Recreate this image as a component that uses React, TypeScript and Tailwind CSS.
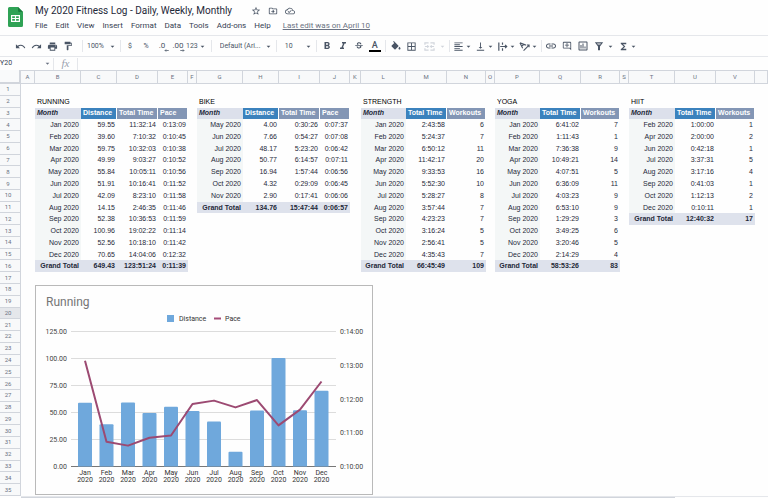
import React from 'react';
import {
  MdUndo,
  MdRedo,
  MdPrint,
  MdFormatPaint,
  MdFormatBold,
  MdFormatItalic,
  MdStrikethroughS,
  MdBorderAll,
  MdFormatAlignLeft,
  MdVerticalAlignBottom,
  MdInsertLink,
  MdOutlineAddComment,
  MdOutlineInsertChart,
  MdFunctions,
  MdStarBorder,
  MdOutlineDriveFileMove,
  MdOutlineCloudDone,
  MdArrowDropDown,
} from 'react-icons/md';

const menus = ['File', 'Edit', 'View', 'Insert', 'Format', 'Data', 'Tools', 'Add-ons', 'Help'];

const columns = [
  { name: 'A', width: 'w-[14px]' },
  { name: 'B', width: 'w-[46px]' },
  { name: 'C', width: 'w-[36px]' },
  { name: 'D', width: 'w-[41px]' },
  { name: 'E', width: 'w-[30px]' },
  { name: 'F', width: 'w-[9px]' },
  { name: 'G', width: 'w-[46px]' },
  { name: 'H', width: 'w-[36px]' },
  { name: 'I', width: 'w-[41px]' },
  { name: 'J', width: 'w-[30px]' },
  { name: 'K', width: 'w-[11px]' },
  { name: 'L', width: 'w-[45px]' },
  { name: 'M', width: 'w-[41px]' },
  { name: 'N', width: 'w-[39px]' },
  { name: 'O', width: 'w-[9px]' },
  { name: 'P', width: 'w-[45px]' },
  { name: 'Q', width: 'w-[41px]' },
  { name: 'R', width: 'w-[39px]' },
  { name: 'S', width: 'w-[9px]' },
  { name: 'T', width: 'w-[46px]' },
  { name: 'U', width: 'w-[41px]' },
  { name: 'V', width: 'w-[39px]' },
  { name: '', width: '' },
];

interface Block {
  title: string;
  start: number;
  headers: string[];
  rows: string[][];
}

// start = index of the block's first column; the last row is the total
const blocks: Block[] = [
  {
    title: 'RUNNING',
    start: 1,
    headers: ['Month', 'Distance', 'Total Time', 'Pace'],
    rows: [
      ['Jan 2020', '59.55', '11:32:14', '0:13:09'],
      ['Feb 2020', '39.60', '7:10:32', '0:10:45'],
      ['Mar 2020', '59.75', '10:32:03', '0:10:38'],
      ['Apr 2020', '49.99', '9:03:27', '0:10:52'],
      ['May 2020', '55.84', '10:05:11', '0:10:56'],
      ['Jun 2020', '51.91', '10:16:41', '0:11:52'],
      ['Jul 2020', '42.09', '8:23:10', '0:11:58'],
      ['Aug 2020', '14.15', '2:46:35', '0:11:46'],
      ['Sep 2020', '52.38', '10:36:53', '0:11:59'],
      ['Oct 2020', '100.96', '19:02:22', '0:11:14'],
      ['Nov 2020', '52.56', '10:18:10', '0:11:42'],
      ['Dec 2020', '70.65', '14:04:06', '0:12:32'],
      ['Grand Total', '649.43', '123:51:24', '0:11:39'],
    ],
  },
  {
    title: 'BIKE',
    start: 6,
    headers: ['Month', 'Distance', 'Total Time', 'Pace'],
    rows: [
      ['May 2020', '4.00', '0:30:26', '0:07:37'],
      ['Jun 2020', '7.66', '0:54:27', '0:07:08'],
      ['Jul 2020', '48.17', '5:23:20', '0:06:42'],
      ['Aug 2020', '50.77', '6:14:57', '0:07:11'],
      ['Sep 2020', '16.94', '1:57:44', '0:06:56'],
      ['Oct 2020', '4.32', '0:29:09', '0:06:45'],
      ['Nov 2020', '2.90', '0:17:41', '0:06:06'],
      ['Grand Total', '134.76', '15:47:44', '0:06:57'],
    ],
  },
  {
    title: 'STRENGTH',
    start: 11,
    headers: ['Month', 'Total Time', 'Workouts'],
    rows: [
      ['Jan 2020', '2:43:58', '6'],
      ['Feb 2020', '5:24:37', '7'],
      ['Mar 2020', '6:50:12', '11'],
      ['Apr 2020', '11:42:17', '20'],
      ['May 2020', '9:33:53', '16'],
      ['Jun 2020', '5:52:30', '10'],
      ['Jul 2020', '5:28:27', '8'],
      ['Aug 2020', '3:57:44', '7'],
      ['Sep 2020', '4:23:23', '7'],
      ['Oct 2020', '3:16:24', '5'],
      ['Nov 2020', '2:56:41', '5'],
      ['Dec 2020', '4:35:43', '7'],
      ['Grand Total', '66:45:49', '109'],
    ],
  },
  {
    title: 'YOGA',
    start: 15,
    headers: ['Month', 'Total Time', 'Workouts'],
    rows: [
      ['Jan 2020', '6:41:02', '7'],
      ['Feb 2020', '1:11:43', '1'],
      ['Mar 2020', '7:36:38', '9'],
      ['Apr 2020', '10:49:21', '14'],
      ['May 2020', '4:07:51', '5'],
      ['Jun 2020', '6:36:09', '11'],
      ['Jul 2020', '4:03:23', '9'],
      ['Aug 2020', '6:53:10', '9'],
      ['Sep 2020', '1:29:29', '3'],
      ['Oct 2020', '3:49:25', '6'],
      ['Nov 2020', '3:20:46', '5'],
      ['Dec 2020', '2:14:29', '4'],
      ['Grand Total', '58:53:26', '83'],
    ],
  },
  {
    title: 'HIIT',
    start: 19,
    headers: ['Month', 'Total Time', 'Workouts'],
    rows: [
      ['Feb 2020', '1:00:00', '1'],
      ['Apr 2020', '2:00:00', '2'],
      ['Jun 2020', '0:42:18', '1'],
      ['Jul 2020', '3:37:31', '5'],
      ['Aug 2020', '3:17:16', '4'],
      ['Sep 2020', '0:41:03', '1'],
      ['Oct 2020', '1:12:13', '2'],
      ['Dec 2020', '0:10:11', '1'],
      ['Grand Total', '12:40:32', '17'],
    ],
  },
];

const rowNumbers = Array.from({ length: 35 }, (_, i) => i + 1);
const SELECTED_ROW = 20;

const getCell = (row: number, col: number): { text: string; style: string } => {
  const block = blocks.find((b) => col >= b.start && col < b.start + b.headers.length);
  if (!block) return { text: '', style: '' };
  const i = col - block.start;

  if (row === 2 && i === 0) return { text: block.title, style: 'text-left text-black' };
  if (row === 3) {
    if (i === 0) return { text: block.headers[0], style: 'text-left font-bold italic bg-[#dce0eb]' };
    const bg = i === 1 ? 'bg-[#3b82bd]' : 'bg-[#8396b5]';
    return { text: block.headers[i], style: `text-left font-bold text-white border-r border-white ${bg}` };
  }

  const data = block.rows[row - 4];
  if (!data) return { text: '', style: '' };
  if (row - 4 === block.rows.length - 1) {
    return { text: data[i], style: 'text-right font-bold bg-[#dee2ec]' };
  }
  return { text: data[i], style: i === 0 ? 'text-right bg-[#f4f7f7]' : 'text-right' };
};

const Caret: React.FC = () => <MdArrowDropDown className="size-[9px] shrink-0" />;

const Separator: React.FC = () => <span className="h-3 w-px shrink-0 bg-gray-200" />;

const Tool: React.FC<{ label: string; children: React.ReactNode }> = ({ label, children }) => (
  <button aria-label={label} className="flex h-4 w-4 shrink-0 items-center justify-center">
    {children}
  </button>
);

const DropTool: React.FC<{ label: string; children: React.ReactNode }> = ({ label, children }) => (
  <button aria-label={label} className="flex h-4 w-[22px] shrink-0 items-center pl-[3px]">
    {children}
    <Caret />
  </button>
);

const Picker: React.FC<{ label: string; value: string; width: string }> = ({ label, value, width }) => (
  <label className={`relative flex h-4 shrink-0 items-center ${width}`}>
    <select aria-label={label} className="w-full appearance-none bg-transparent text-[7px] leading-4 outline-none">
      <option>{value}</option>
    </select>
    <span className="pointer-events-none absolute right-[3px]">
      <Caret />
    </span>
  </label>
);

const SheetsLogo: React.FC = () => (
  <svg viewBox="0 0 15 20" className="h-5 w-[15px] shrink-0">
    <path d="M1.5 0H10l5 5v13.5a1.5 1.5 0 0 1-1.5 1.5h-12A1.5 1.5 0 0 1 0 18.500v-17A1.5 1.5 0 0 1 1.500 0z" fill="#2fa255" />
    <path d="M10 0l5 5h-3.700A1.300 1.300 0 0 1 10 3.700z" fill="#1b7d3e" />
    <path d="M3 8h9v7H3zM4.200 9.200v1.700h2.700V9.200zm3.900 0v1.700h2.700V9.200zM4.200 12.100v1.700h2.700v-1.700zm3.900 0v1.700h2.700v-1.700z" fill="#fff" fillRule="evenodd" />
  </svg>
);

const Header: React.FC = () => (
  <header className="flex items-start gap-3 px-2 pt-[7px] h-[35px]">
    <SheetsLogo />
    <div className="-mt-[3px]">
      <div className="flex items-center">
        <h1 className="text-[10px] leading-[14px] whitespace-nowrap text-gray-800">
          My 2020 Fitness Log - Daily, Weekly, Monthly
        </h1>
        <div className="ml-[19px] flex gap-[7px] text-gray-600">
          <button aria-label="Star"><MdStarBorder className="size-[10px]" /></button>
          <button aria-label="Move"><MdOutlineDriveFileMove className="size-[10px]" /></button>
          <button aria-label="See document status"><MdOutlineCloudDone className="size-[10px]" /></button>
        </div>
      </div>
      <nav className="flex gap-[8px] pt-[2px] text-[8px] leading-3 whitespace-nowrap text-gray-700">
        {menus.map((menu) => (
          <button key={menu}>{menu}</button>
        ))}
        <a href="#history" className="ml-1 text-gray-500 underline">
          Last edit was on April 10
        </a>
      </nav>
    </div>
  </header>
);

const Toolbar: React.FC = () => (
  <div className="flex h-[22px] items-center overflow-hidden border-y border-gray-200 pl-3 text-[7px] text-gray-600">
    <div className="flex pr-[6px]">
      <Tool label="Undo"><MdUndo className="size-[11px]" /></Tool>
      <Tool label="Redo"><MdRedo className="size-[11px]" /></Tool>
      <Tool label="Print"><MdPrint className="size-[11px]" /></Tool>
      <Tool label="Paint format"><MdFormatPaint className="size-[10px]" /></Tool>
    </div>
    <Separator />
    <Picker label="Zoom" value="100%" width="w-[37px] pl-1" />
    <Separator />
    <div className="flex pr-1 pl-px">
      <Tool label="Format as currency">$</Tool>
      <Tool label="Format as percent">%</Tool>
      <Tool label="Decrease decimal places">
        <span className="relative text-[8px]">
          .0
          <svg viewBox="0 0 6 4" className="absolute -right-1 bottom-0 h-[3px] w-[5px]">
            <path d="M6 2H1M2.500 0.500L1 2l1.500 1.500" stroke="currentColor" fill="none" />
          </svg>
        </span>
      </Tool>
      <Tool label="Increase decimal places">
        <span className="relative text-[8px]">
          .00
          <svg viewBox="0 0 6 4" className="absolute -right-px bottom-0 h-[3px] w-[5px]">
            <path d="M0 2h5M3.500 0.500L5 2 3.500 3.500" stroke="currentColor" fill="none" />
          </svg>
        </span>
      </Tool>
      <button aria-label="More formats" className="flex h-4 shrink-0 items-center">
        123
        <Caret />
      </button>
    </div>
    <Separator />
    <Picker label="Font" value="Default (Ari..." width="w-16 pl-2" />
    <Separator />
    <Picker label="Font size" value="10" width="w-[39px] pl-2" />
    <Separator />
    <div className="flex px-[2px]">
      <Tool label="Bold"><MdFormatBold className="size-[12px]" /></Tool>
      <Tool label="Italic"><MdFormatItalic className="size-[12px]" /></Tool>
      <Tool label="Strikethrough"><MdStrikethroughS className="size-[10px]" /></Tool>
      <Tool label="Text color">
        <span className="w-3 border-b-2 border-black text-center text-[9px] leading-[10px] font-medium">A</span>
      </Tool>
    </div>
    <Separator />
    <div className="flex pl-[2px]">
      <Tool label="Fill color">
        <svg viewBox="0 0 24 20" className="h-[10px] w-3" fill="currentColor">
          <path d="M16.560 8.940L7.620 0 6.210 1.410l2.380 2.380-5.150 5.150a1.490 1.490 0 0 0 0 2.120l5.500 5.500c.290.290.680.440 1.060.440s.770-.150 1.060-.440l5.500-5.500c.590-.580.590-1.530 0-2.120zM19 11.500s-2 2.170-2 3.500c0 1.100.9 2 2 2s2-.9 2-2c0-1.330-2-3.500-2-3.500z" />
        </svg>
      </Tool>
      <Tool label="Borders"><MdBorderAll className="size-[11px]" /></Tool>
      <button aria-label="Merge cells" className="flex h-4 w-[29px] shrink-0 items-center gap-[3px] pl-1 text-gray-300">
        <svg viewBox="0 0 12 12" className="size-[11px]" fill="none" stroke="currentColor" strokeWidth="1.300">
          <path d="M1 4V2h4M7 2h4v2M1 8v2h4M7 10h4V8M1 6h3.500M11 6H7.500M3.500 4.800L4.800 6 3.500 7.200M8.500 4.800L7.200 6l1.300 1.200" />
        </svg>
        <Caret />
      </button>
    </div>
    <Separator />
    <div className="flex pr-[3px]">
      <DropTool label="Horizontal align"><MdFormatAlignLeft className="size-[11px] shrink-0" /></DropTool>
      <DropTool label="Vertical align"><MdVerticalAlignBottom className="size-[11px] shrink-0" /></DropTool>
      <DropTool label="Text wrapping">
        <svg viewBox="0 0 12 12" className="size-[11px] shrink-0" fill="none" stroke="currentColor" strokeWidth="1.300">
          <path d="M2 1.500v9M6 1.500v2.500M6 8v2.500M3.500 6h7M8.800 4.200L10.600 6 8.800 7.800" />
        </svg>
      </DropTool>
      <DropTool label="Text rotation">
        <svg viewBox="0 0 12 12" className="size-[11px] shrink-0" fill="none" stroke="currentColor" strokeWidth="1.200">
          <path d="M1 2l6.500 2.500M1 2l3 6M3 5.500l2.500-2M5 10.500l6-6M8.500 4.300H11v2.500" />
        </svg>
      </DropTool>
    </div>
    <Separator />
    <div className="flex pl-px">
      <Tool label="Insert link"><MdInsertLink className="size-[12px]" /></Tool>
      <Tool label="Insert comment"><MdOutlineAddComment className="size-[10px]" /></Tool>
      <Tool label="Insert chart"><MdOutlineInsertChart className="size-[12px]" /></Tool>
      <button aria-label="Create a filter" className="flex h-4 w-6 shrink-0 items-center gap-[2px] pl-[3px]">
        <svg viewBox="0 0 12 12" className="size-[10px] shrink-0">
          <path d="M1 1.500h10L7.200 6.500v4.500H4.800V6.500zM3.600 3l1 1.300h2.800L8.400 3z" fill="currentColor" fillRule="evenodd" />
        </svg>
        <Caret />
      </button>
      <DropTool label="Functions"><MdFunctions className="size-[11px] shrink-0" /></DropTool>
    </div>
  </div>
);

const FormulaBar: React.FC = () => (
  <div className="flex h-[13px] items-center text-[7px] text-gray-700">
    <input aria-label="Name box" defaultValue="Y20" className="w-[43px] shrink-0 bg-transparent outline-none" />
    <span className="flex w-[10px] text-gray-500"><Caret /></span>
    <Separator />
    <span className="w-[23px] text-center font-['Liberation_Serif',serif] text-[11px] italic text-gray-400">fx</span>
    <Separator />
    <input aria-label="Formula" className="min-w-0 flex-1 bg-transparent outline-none" />
  </div>
);

const toMinutes = (pace: string) => {
  const [h, m, s] = pace.split(':').map(Number);
  return h * 60 + m + s / 60;
};

const points = blocks[0].rows.slice(0, 12).map(([month, distance, , pace], i) => ({
  month: month.split(' ')[0],
  year: month.split(' ')[1],
  x: 50 + i * 21.5,
  barY: 182 - (Number(distance) / 125) * 135,
  lineY: 182 - ((toMinutes(pace) - 10) / 4) * 135,
}));

const RunningChart: React.FC = () => (
  <svg
    viewBox="0 0 338 210"
    role="img"
    aria-label="Running distance and pace"
    className="block h-[210px] w-[338px] bg-white font-['Roboto',sans-serif] text-[7px]"
  >
    <rect x="0.5" y="0.5" width="337" height="209" fill="#fefefe" stroke="#b9b9b9" />
    <text x="11" y="21" className="text-[12px]" fill="#757575">Running</text>

    <rect x="132" y="30" width="7" height="7" fill="#6fa8dc" />
    <text x="144" y="36" fill="#333">Distance</text>
    <path d="M179 33.500h7" stroke="#a64d79" strokeWidth="2" />
    <text x="190" y="36" fill="#333">Pace</text>

    {['125.00', '100.00', '75.00', '50.00', '25.00', '0.00'].map((label, i) => (
      <g key={label}>
        <path d={`M36 ${46.5 + i * 27}H301`} stroke={i === 5 ? '#777' : '#dcdcdc'} />
        <text x="32" y={49 + i * 27} textAnchor="end" fill="#444">{label}</text>
      </g>
    ))}
    {['0:14:00', '0:13:00', '0:12:00', '0:11:00', '0:10:00'].map((label, i) => (
      <text key={label} x="305" y={49 + i * 33.75} fill="#444">{label}</text>
    ))}

    {points.map((p) => (
      <g key={p.month}>
        <path d={`M${p.x - 7} 181.500V${p.barY + 1}q0-1 1-1h12q1 0 1 1V181.500z`} fill="#6fa8dc" />
        <text x={p.x} y="190" textAnchor="middle" fill="#333">{p.month}</text>
        <text x={p.x} y="197" textAnchor="middle" fill="#333">{p.year}</text>
      </g>
    ))}
    <polyline
      points={points.map((p) => `${p.x},${p.lineY}`).join(' ')}
      fill="none"
      stroke="#9c4a72"
      strokeWidth="2"
      strokeLinejoin="round"
    />
  </svg>
);

const Sheet: React.FC = () => (
  <div className="relative overflow-hidden">
    <table className="h-[426px] w-full table-fixed border-separate border-spacing-0 font-['Liberation_Sans',sans-serif] text-[7px] leading-[10px] whitespace-nowrap text-gray-800">
      <colgroup>
        <col className="w-[21px]" />
        {columns.map((c, i) => (
          <col key={i} className={c.width} />
        ))}
      </colgroup>
      <thead className="font-['Roboto',sans-serif] text-[6px] text-gray-500">
        <tr className="h-[14px]">
          <th className="border-r-2 border-b-2 border-gray-300 bg-gray-50 p-0" />
          {columns.map((c, i) => (
            <th key={i} scope="col" className="border-t border-r border-b border-gray-300 bg-[#f8f9fa] p-0 text-center font-normal">
              {c.name}
            </th>
          ))}
        </tr>
      </thead>
      <tbody>
        {rowNumbers.map((row) => (
          <tr key={row}>
            <th
              scope="row"
              className={`border-r border-b border-gray-300 p-0 pr-1 text-center font-['Roboto',sans-serif] text-[6px] font-normal text-gray-500 ${row === SELECTED_ROW ? 'bg-gray-200' : 'bg-[#f8f9fa]'}`}
            >
              {row}
            </th>
            {columns.map((_, col) => {
              const cell = getCell(row, col);
              return (
                <td key={col} className={`px-[2px] py-0 ${cell.style}`}>
                  {cell.text}
                </td>
              );
            })}
          </tr>
        ))}
      </tbody>
    </table>
    {/* Chart floats over the cells */}
    <div className="absolute top-[215px] left-[35px]">
      <RunningChart />
    </div>
  </div>
);

const App: React.FC = () => {
  return (
    <div className="flex min-h-screen flex-col overflow-hidden bg-[#fefefe] font-['Roboto',sans-serif]">
      <Header />
      <Toolbar />
      <FormulaBar />
      <main>
        <Sheet />
      </main>
      <div className="ml-[21px] h-[2px] border-t border-gray-200">
        <div className="h-[2px] w-7/8 bg-gray-300" />
      </div>
    </div>
  );
};

export default App;
